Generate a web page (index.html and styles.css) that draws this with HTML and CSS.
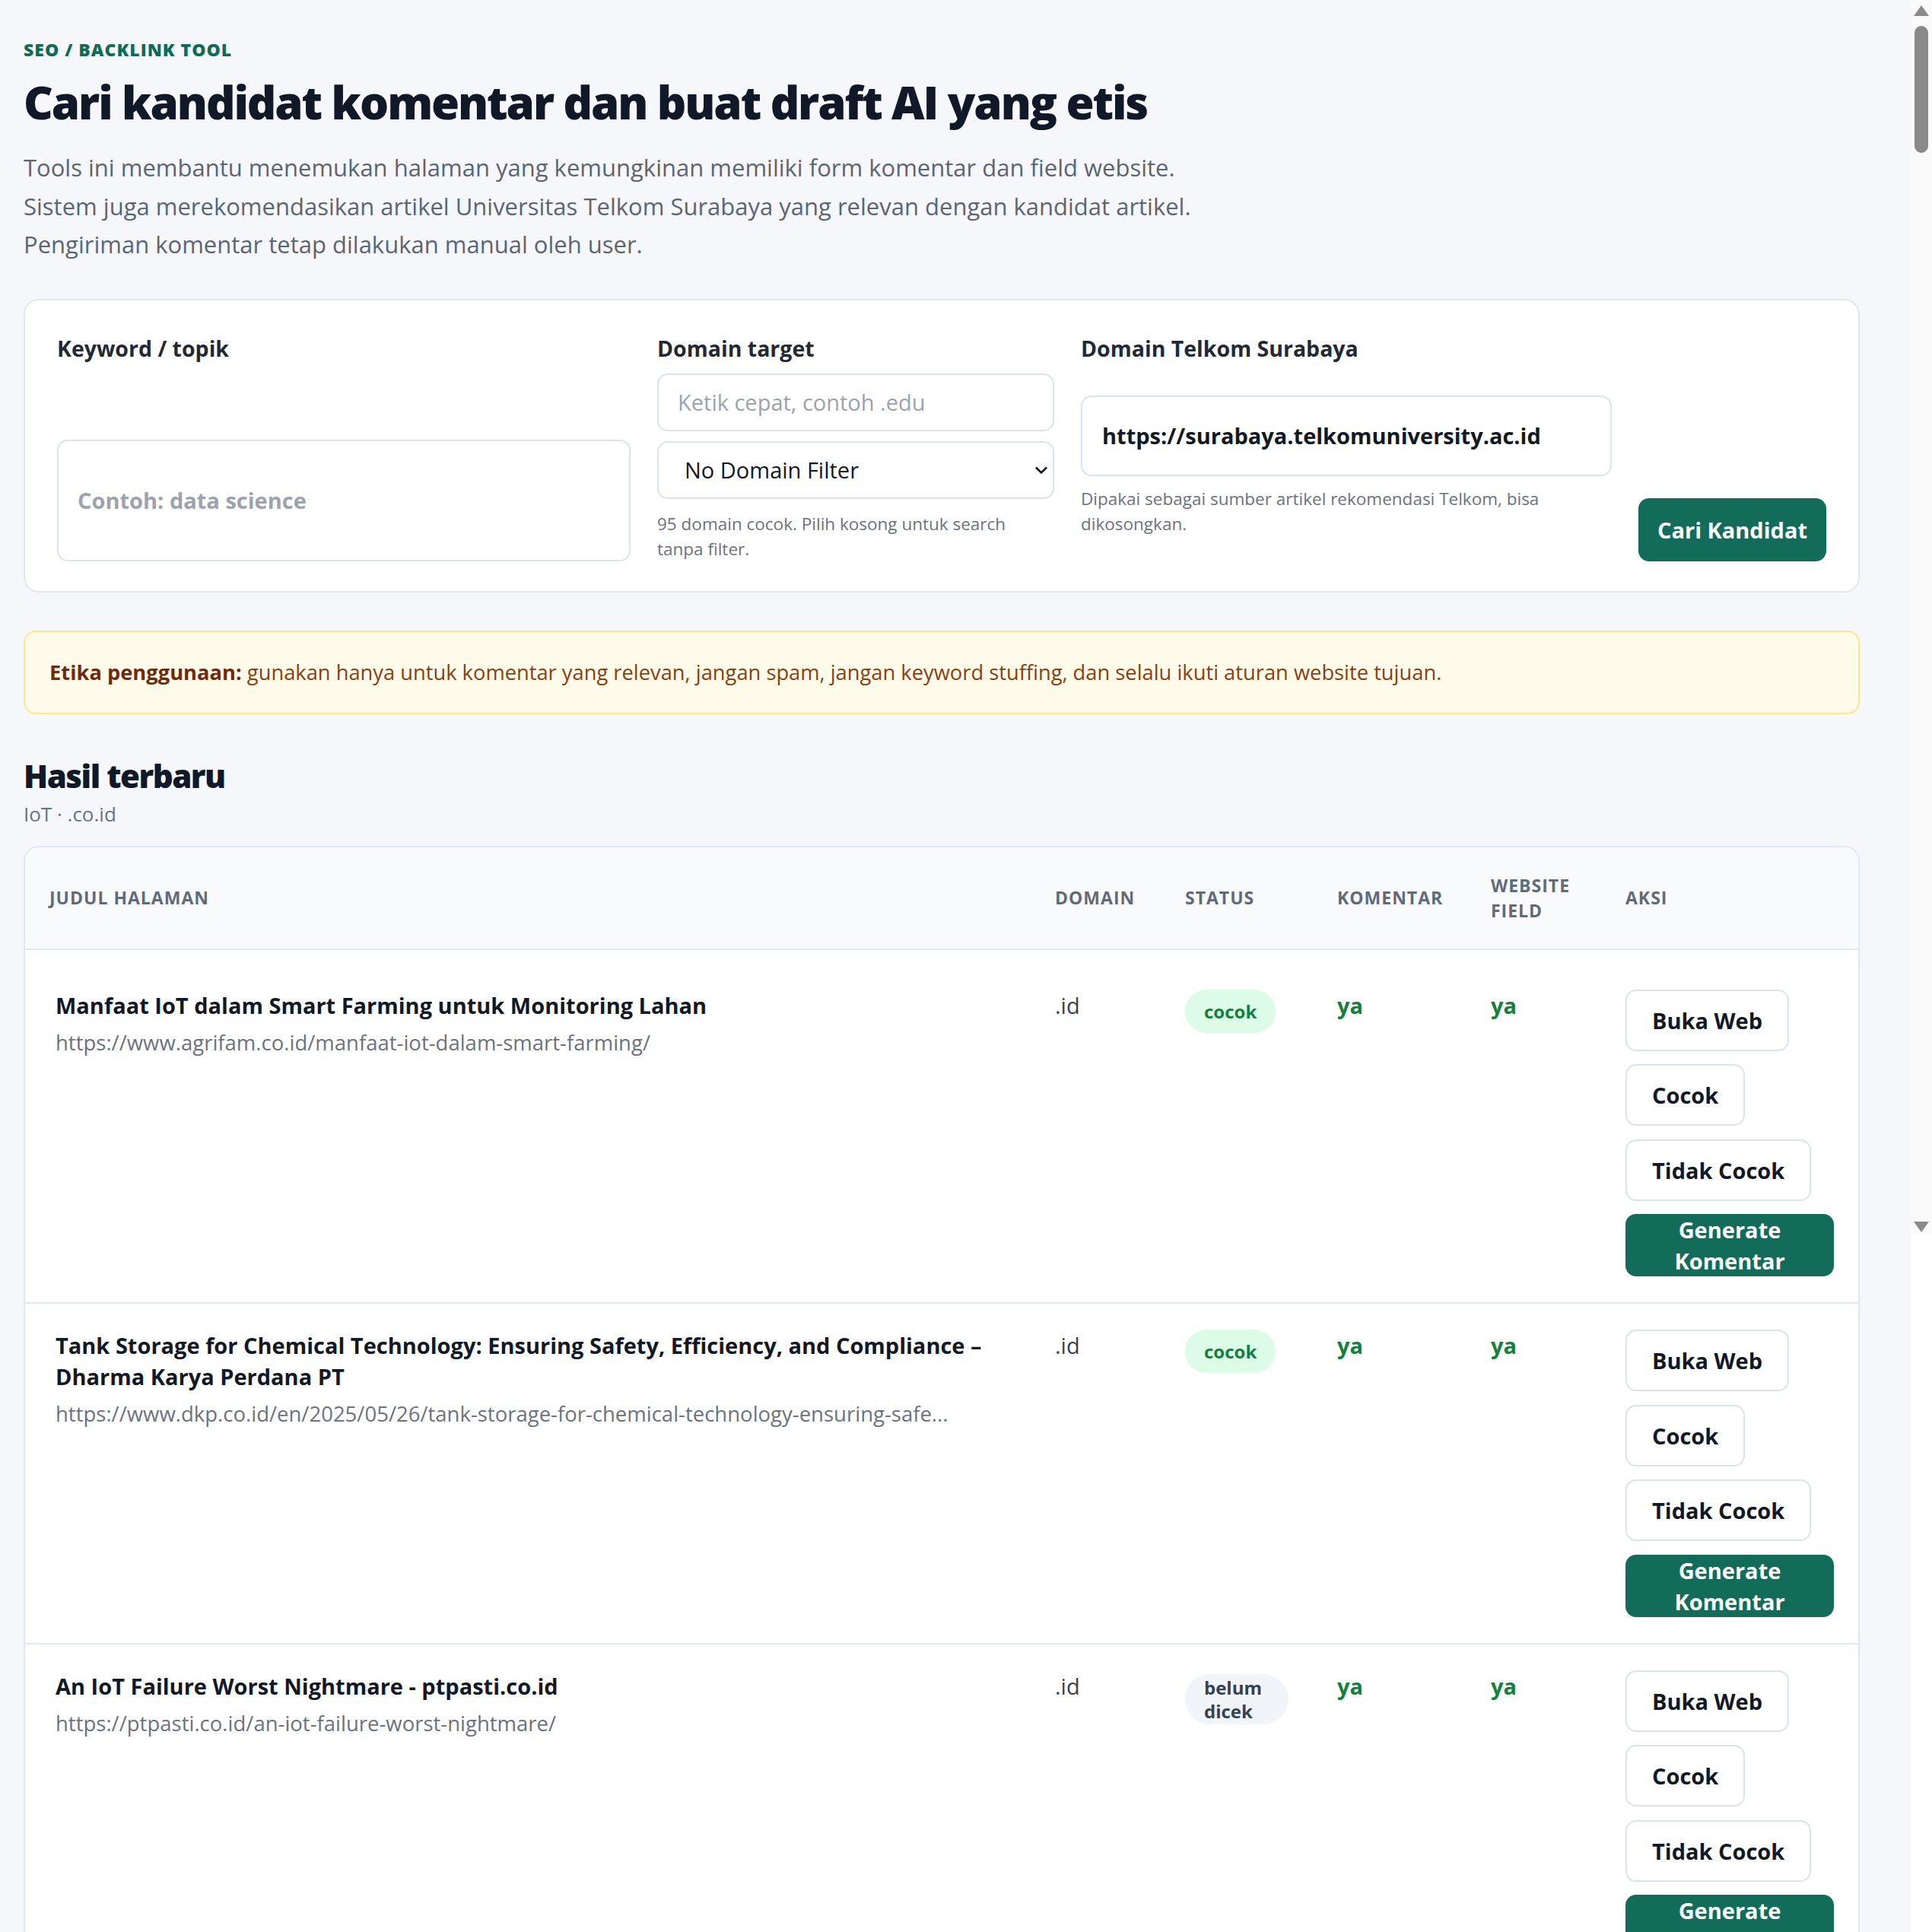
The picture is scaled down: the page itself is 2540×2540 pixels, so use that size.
FILE: index.html
```html
<!DOCTYPE html>
<html lang="id">
<head>
    <meta charset="UTF-8">
    <meta name="viewport" content="width=device-width, initial-scale=1.0">
    <title>SEO / Backlink Tool</title>
    <link rel="stylesheet" href="styles.css">
</head>
<body>
<div class="screen">
    <main class="page">
        <p class="eyebrow">SEO / Backlink Tool</p>
        <h1>Cari kandidat komentar dan buat draft AI yang etis</h1>
        <p class="lead">
            Tools ini membantu menemukan halaman yang kemungkinan memiliki form komentar dan field website.<br>
            Sistem juga merekomendasikan artikel Universitas Telkom Surabaya yang relevan dengan kandidat artikel.<br>
            Pengiriman komentar tetap dilakukan manual oleh user.
        </p>

        <!-- Form pencarian -->
        <form class="search-card">
            <div class="field field-keyword">
                <label for="keyword">Keyword / topik</label>
                <input id="keyword" class="input input-keyword" type="text" placeholder="Contoh: data science">
            </div>
            <div class="field field-domain">
                <label for="domainSearch">Domain target</label>
                <input id="domainSearch" class="input input-domain" type="text" placeholder="Ketik cepat, contoh .edu">
                <div class="select-wrap">
                    <select class="input select">
                        <option>No Domain Filter</option>
                        <option>.edu</option>
                        <option>.ac.id</option>
                        <option>.co.id</option>
                    </select>
                    <svg class="chevron" width="18" height="12" viewBox="0 0 18 12"><path d="M2 2.5l7 7 7-7" fill="none" stroke="#111827" stroke-width="2.6"/></svg>
                </div>
                <p class="hint hint-domain">95 domain cocok. Pilih kosong untuk search tanpa filter.</p>
            </div>
            <div class="field field-telkom">
                <label for="telkom">Domain Telkom Surabaya</label>
                <input id="telkom" class="input input-telkom" type="text" value="https://surabaya.telkomuniversity.ac.id">
                <p class="hint hint-telkom">Dipakai sebagai sumber artikel rekomendasi Telkom, bisa dikosongkan.</p>
            </div>
            <button type="button" class="btn btn-primary btn-search">Cari Kandidat</button>
        </form>

        <div class="notice">
            <strong>Etika penggunaan:</strong> gunakan hanya untuk komentar yang relevan, jangan spam, jangan keyword stuffing, dan selalu ikuti aturan website tujuan.
        </div>

        <!-- Hasil -->
        <section class="results">
            <h2>Hasil terbaru</h2>
            <p class="results-meta">IoT · .co.id</p>

            <div class="table-card">
                <table>
                    <colgroup>
                        <col class="col-title">
                        <col class="col-domain">
                        <col class="col-status">
                        <col class="col-komentar">
                        <col class="col-website">
                        <col class="col-aksi">
                    </colgroup>
                    <thead>
                        <tr>
                            <th>Judul Halaman</th>
                            <th>Domain</th>
                            <th>Status</th>
                            <th>Komentar</th>
                            <th>Website Field</th>
                            <th>Aksi</th>
                        </tr>
                    </thead>
                    <tbody>
                        <tr>
                            <td class="cell-title">
                                <div class="page-title">Manfaat IoT dalam Smart Farming untuk Monitoring Lahan</div>
                                <div class="page-url">https://www.agrifam.co.id/manfaat-iot-dalam-smart-farming/</div>
                            </td>
                            <td class="cell-text">.id</td>
                            <td><span class="badge badge-ok">cocok</span></td>
                            <td class="cell-yes">ya</td>
                            <td class="cell-yes">ya</td>
                            <td>
                                <div class="actions">
                                    <button class="btn btn-outline">Buka Web</button>
                                    <button class="btn btn-outline">Cocok</button>
                                    <button class="btn btn-outline">Tidak Cocok</button>
                                    <button class="btn btn-primary">Generate Komentar</button>
                                </div>
                            </td>
                        </tr>
                        <tr>
                            <td class="cell-title">
                                <div class="page-title">Tank Storage for Chemical Technology: Ensuring Safety, Efficiency, and Compliance – Dharma Karya Perdana PT</div>
                                <div class="page-url">https://www.dkp.co.id/en/2025/05/26/tank-storage-for-chemical-technology-ensuring-safe...</div>
                            </td>
                            <td class="cell-text">.id</td>
                            <td><span class="badge badge-ok">cocok</span></td>
                            <td class="cell-yes">ya</td>
                            <td class="cell-yes">ya</td>
                            <td>
                                <div class="actions">
                                    <button class="btn btn-outline">Buka Web</button>
                                    <button class="btn btn-outline">Cocok</button>
                                    <button class="btn btn-outline">Tidak Cocok</button>
                                    <button class="btn btn-primary">Generate Komentar</button>
                                </div>
                            </td>
                        </tr>
                        <tr>
                            <td class="cell-title">
                                <div class="page-title">An IoT Failure Worst Nightmare - ptpasti.co.id</div>
                                <div class="page-url">https://ptpasti.co.id/an-iot-failure-worst-nightmare/</div>
                            </td>
                            <td class="cell-text">.id</td>
                            <td><span class="badge badge-pending">belum dicek</span></td>
                            <td class="cell-yes">ya</td>
                            <td class="cell-yes">ya</td>
                            <td>
                                <div class="actions">
                                    <button class="btn btn-outline">Buka Web</button>
                                    <button class="btn btn-outline">Cocok</button>
                                    <button class="btn btn-outline">Tidak Cocok</button>
                                    <button class="btn btn-primary">Generate Komentar</button>
                                </div>
                            </td>
                        </tr>
                    </tbody>
                </table>
            </div>
        </section>
    </main>

    <!-- scrollbar of the captured window -->
    <div class="scrollbar">
        <span class="arrow arrow-up"></span>
        <span class="thumb"></span>
        <span class="arrow arrow-down"></span>
    </div>
</div>
</body>
</html>
```

FILE: styles.css
```css
/* Base */
body {
    margin: 0;
    background-color: #fff;
    color: #111827;
    font-family: "Open Sans", "Noto Sans", sans-serif;
    overflow: hidden;
}
.screen {
    display: flex;
    align-items: flex-start;
}
.page {
    flex: 1;
    min-height: 2540px;
    background-color: #f5f7fa;
    padding: 50px 67px 0 31px;
}

/* Header */
.eyebrow {
    margin: 0;
    font-size: 23px;
    line-height: 30px;
    font-weight: 800;
    letter-spacing: 1px;
    text-transform: uppercase;
    color: #0f6b57;
}
h1 {
    margin: 18px 0 0;
    font-size: 60px;
    line-height: 72px;
    font-weight: 800;
    letter-spacing: -2.1px;
    color: #111827;
}
.lead {
    margin: 25px 0 0;
    font-size: 31px;
    line-height: 50.5px;
    color: #5b6573;
}

/* Search form */
.search-card {
    margin-top: 46px;
    display: grid;
    grid-template-columns: 754px 522px 698px 1fr;
    column-gap: 35px;
    background-color: #fff;
    border: 2px solid #e3e8ee;
    border-radius: 20px;
    padding: 41px 42px 39px;
}
.field {
    display: flex;
    flex-direction: column;
}
.field label {
    padding-top: 3px;
    font-size: 28.5px;
    line-height: 38px;
    font-weight: 700;
    color: #1f2937;
}
.input {
    box-sizing: border-box;
    width: 100%;
    border: 2px solid #dde3ea;
    border-radius: 14px;
    background-color: #fff;
    font-family: inherit;
    font-size: 29px;
    color: #111827;
    padding: 0 25px;
    outline: none;
}
.input::placeholder {
    color: #9ca3af;
}
.input-keyword {
    margin-top: auto;
    height: 160px;
    font-weight: 700;
}
.input-domain {
    margin-top: 14px;
    height: 76px;
}
.select-wrap {
    position: relative;
    margin-top: 13px;
}
.select {
    height: 76px;
    padding-left: 34px;
    appearance: none;
    -webkit-appearance: none;
}
.chevron {
    position: absolute;
    right: 8px;
    top: 32px;
}
.hint {
    margin: 0;
    font-size: 22.5px;
    line-height: 33px;
    color: #6b7280;
}
.hint-domain {
    margin-top: 16px;
}
.input-telkom {
    margin-top: 43px;
    height: 106px;
    font-weight: 700;
    padding-left: 26px;
}
.hint-telkom {
    margin-top: 13px;
}

/* Buttons */
.btn {
    box-sizing: border-box;
    display: inline-flex;
    align-items: center;
    justify-content: center;
    text-align: center;
    min-height: 81px;
    padding: 0 33px;
    border: 2px solid #dde3ea;
    border-radius: 14px;
    background-color: #fff;
    color: #111827;
    font-family: inherit;
    font-size: 29px;
    line-height: 41px;
    font-weight: 700;
    cursor: pointer;
}
.btn-primary {
    border: 0;
    background-color: #136b59;
    color: #fff;
}
.btn-search {
    align-self: end;
    height: 83px;
    padding: 0 20px;
    white-space: nowrap;
}

/* Notice */
.notice {
    margin-top: 50px;
    background-color: #fffbea;
    border: 2px solid #fde68a;
    border-radius: 16px;
    padding: 35px 32px;
    font-size: 27.3px;
    line-height: 36px;
    color: #8a3f10;
}
.notice strong {
    color: #6f2a0c;
}

/* Results */
.results h2 {
    margin: 56px 0 0;
    font-size: 42px;
    line-height: 50px;
    font-weight: 800;
    letter-spacing: -1.5px;
    color: #111827;
}
.results-meta {
    margin: 7px 0 0;
    font-size: 26px;
    line-height: 36px;
    color: #64748b;
}
.table-card {
    margin-top: 24px;
    background-color: #fff;
    border: 2px solid #e2e8f0;
    border-radius: 20px;
    overflow: hidden;
}
table {
    width: 100%;
    border-collapse: collapse;
    table-layout: fixed;
}
.col-title { width: 1322px; }
.col-domain { width: 171px; }
.col-status { width: 200px; }
.col-komentar { width: 202px; }
.col-website { width: 177px; }
.col-aksi { width: 338px; }
th {
    background-color: #f8fafc;
    text-align: left;
    padding: 34px 32px 33px;
    font-size: 23px;
    line-height: 33px;
    font-weight: 700;
    letter-spacing: 1px;
    text-transform: uppercase;
    color: #5f6b7a;
    border-bottom: 2px solid #e2e8f0;
}
td {
    vertical-align: top;
    padding: 34px 32px;
    border-bottom: 2px solid #e2e8f0;
    font-size: 29px;
    line-height: 41px;
}
tbody tr:first-child td {
    padding-top: 52px;
}
.cell-title {
    padding-left: 40px;
}
.page-title {
    font-weight: 700;
    color: #111827;
}
.page-url {
    margin-top: 9px;
    font-size: 27.5px;
    line-height: 40px;
    color: #6b7280;
}
.cell-text {
    color: #374151;
}
.cell-yes {
    font-weight: 700;
    color: #15803d;
}
.badge {
    box-sizing: border-box;
    display: inline-flex;
    align-items: center;
    min-height: 57px;
    padding: 2px 25px;
    border-radius: 999px;
    font-size: 24px;
    line-height: 31px;
    font-weight: 700;
}
.badge-ok {
    background-color: #dcfce7;
    color: #15803d;
}
.badge-pending {
    background-color: #f1f5f9;
    color: #334155;
}
.actions {
    display: flex;
    flex-direction: column;
    align-items: flex-start;
    gap: 17.5px;
}

/* Scrollbar strip */
.scrollbar {
    width: 28px;
    height: 1622px;
    background-color: #fafafa;
    display: flex;
    flex-direction: column;
    align-items: center;
}
.arrow {
    width: 0;
    height: 0;
    border-left: 10px solid transparent;
    border-right: 10px solid transparent;
}
.arrow-up {
    margin-top: 7px;
    border-bottom: 14px solid #8a8a8a;
}
.arrow-down {
    margin-top: auto;
    margin-bottom: 2px;
    border-top: 14px solid #8a8a8a;
}
.thumb {
    width: 18px;
    height: 167px;
    margin-top: 13px;
    border-radius: 9px;
    background-color: #8a8a8a;
}
```
